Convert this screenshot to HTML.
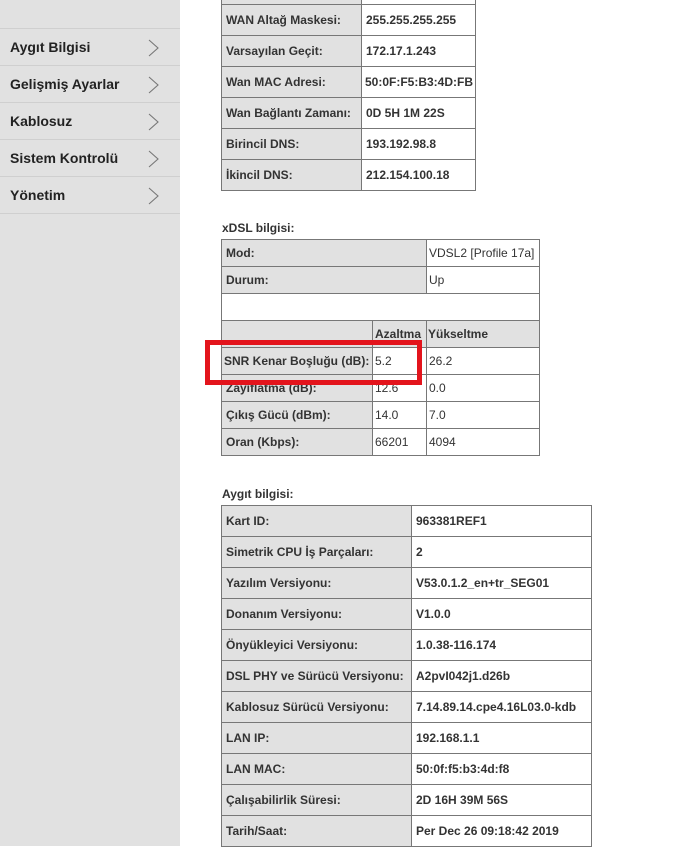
<!DOCTYPE html>
<html><head><meta charset="utf-8"><style>
body{margin:0;width:689px;height:846px;overflow:hidden;background:#fff;position:relative;font-family:"Liberation Sans",Arial,sans-serif;color:#333}
.side{position:absolute;left:0;top:0;width:180px;height:846px;background:#e1e1e1}
.mi{position:absolute;left:0;width:180px;height:37px;border-top:1px solid #cfcfcf;font-weight:bold;font-size:14px;color:#222;line-height:37px;padding-left:10px;box-sizing:border-box}
.mi svg{position:absolute;left:148px;top:10px}
.last{position:absolute;left:0;top:213px;width:180px;border-top:1px solid #cfcfcf}
table{position:absolute;border-collapse:collapse;table-layout:fixed;font-size:12px}
td{border:1px solid #777;padding:0 0 0 4px;white-space:nowrap;overflow:hidden}
.g{background:#e1e1e1}
.b td{font-weight:bold}
.lbl{position:absolute;font-weight:bold;font-size:12px;color:#333}
.x td.g{font-weight:bold}
.x td{height:26px}
</style></head><body>
<div class="side">
<div class="mi" style="top:28px">Aygıt Bilgisi<svg width="11" height="18"><path d="M1 1L10 9L1 17" fill="none" stroke="#777" stroke-width="1.1"/></svg></div>
<div class="mi" style="top:65px">Gelişmiş Ayarlar<svg width="11" height="18"><path d="M1 1L10 9L1 17" fill="none" stroke="#777" stroke-width="1.1"/></svg></div>
<div class="mi" style="top:102px">Kablosuz<svg width="11" height="18"><path d="M1 1L10 9L1 17" fill="none" stroke="#777" stroke-width="1.1"/></svg></div>
<div class="mi" style="top:139px">Sistem Kontrolü<svg width="11" height="18"><path d="M1 1L10 9L1 17" fill="none" stroke="#777" stroke-width="1.1"/></svg></div>
<div class="mi" style="top:176px">Yönetim<svg width="11" height="18"><path d="M1 1L10 9L1 17" fill="none" stroke="#777" stroke-width="1.1"/></svg></div>
<div class="last"></div>
</div>

<table class="b" style="left:221px;top:-27px;width:255px">
<col style="width:140px"><col>
<tr style="height:31px"><td class="g"></td><td></td></tr>
<tr style="height:31px"><td class="g">WAN Altağ Maskesi:</td><td>255.255.255.255</td></tr>
<tr style="height:31px"><td class="g">Varsayılan Geçit:</td><td>172.17.1.243</td></tr>
<tr style="height:31px"><td class="g">Wan MAC Adresi:</td><td style="padding-left:3px">50:0F:F5:B3:4D:FB</td></tr>
<tr style="height:31px"><td class="g">Wan Bağlantı Zamanı:</td><td>0D 5H 1M 22S</td></tr>
<tr style="height:31px"><td class="g">Birincil DNS:</td><td>193.192.98.8</td></tr>
<tr style="height:31px"><td class="g">İkincil DNS:</td><td>212.154.100.18</td></tr>
</table>

<div class="lbl" style="left:222px;top:221px">xDSL bilgisi:</div>
<table class="x" style="left:221px;top:239px;width:319px">
<col style="width:151px"><col style="width:54px"><col>
<tr><td class="g" colspan="2">Mod:</td><td style="padding-left:2px">VDSL2 [Profile 17a]</td></tr>
<tr><td class="g" colspan="2">Durum:</td><td style="padding-left:2px">Up</td></tr>
<tr><td colspan="3"></td></tr>
<tr><td class="g"></td><td class="g" style="padding-left:2px;font-weight:bold">Azaltma</td><td class="g" style="padding-left:1px">Yükseltme</td></tr>
<tr><td class="g" style="padding-left:2px">SNR Kenar Boşluğu (dB):</td><td style="padding-left:2px">5.2</td><td style="padding-left:2px">26.2</td></tr>
<tr><td class="g">Zayıflatma (dB):</td><td style="padding-left:2px">12.6</td><td style="padding-left:2px">0.0</td></tr>
<tr><td class="g">Çıkış Gücü (dBm):</td><td style="padding-left:2px">14.0</td><td style="padding-left:2px">7.0</td></tr>
<tr><td class="g">Oran (Kbps):</td><td style="padding-left:2px">66201</td><td style="padding-left:2px">4094</td></tr>
</table>
<div style="position:absolute;left:205px;top:340px;width:207px;height:35px;border:5px solid #e3141c"></div>

<div class="lbl" style="left:222px;top:487px">Aygıt bilgisi:</div>
<table class="b" style="left:221px;top:505px;width:371px">
<col style="width:190px"><col>
<tr style="height:31px"><td class="g">Kart ID:</td><td>963381REF1</td></tr>
<tr style="height:31px"><td class="g">Simetrik CPU İş Parçaları:</td><td>2</td></tr>
<tr style="height:31px"><td class="g">Yazılım Versiyonu:</td><td>V53.0.1.2_en+tr_SEG01</td></tr>
<tr style="height:31px"><td class="g">Donanım Versiyonu:</td><td>V1.0.0</td></tr>
<tr style="height:31px"><td class="g">Önyükleyici Versiyonu:</td><td>1.0.38-116.174</td></tr>
<tr style="height:31px"><td class="g">DSL PHY ve Sürücü Versiyonu:</td><td>A2pvI042j1.d26b</td></tr>
<tr style="height:31px"><td class="g">Kablosuz Sürücü Versiyonu:</td><td>7.14.89.14.cpe4.16L03.0-kdb</td></tr>
<tr style="height:31px"><td class="g">LAN IP:</td><td>192.168.1.1</td></tr>
<tr style="height:31px"><td class="g">LAN MAC:</td><td>50:0f:f5:b3:4d:f8</td></tr>
<tr style="height:31px"><td class="g">Çalışabilirlik Süresi:</td><td>2D 16H 39M 56S</td></tr>
<tr style="height:31px"><td class="g">Tarih/Saat:</td><td>Per Dec 26 09:18:42 2019</td></tr>
</table>
</body></html>
